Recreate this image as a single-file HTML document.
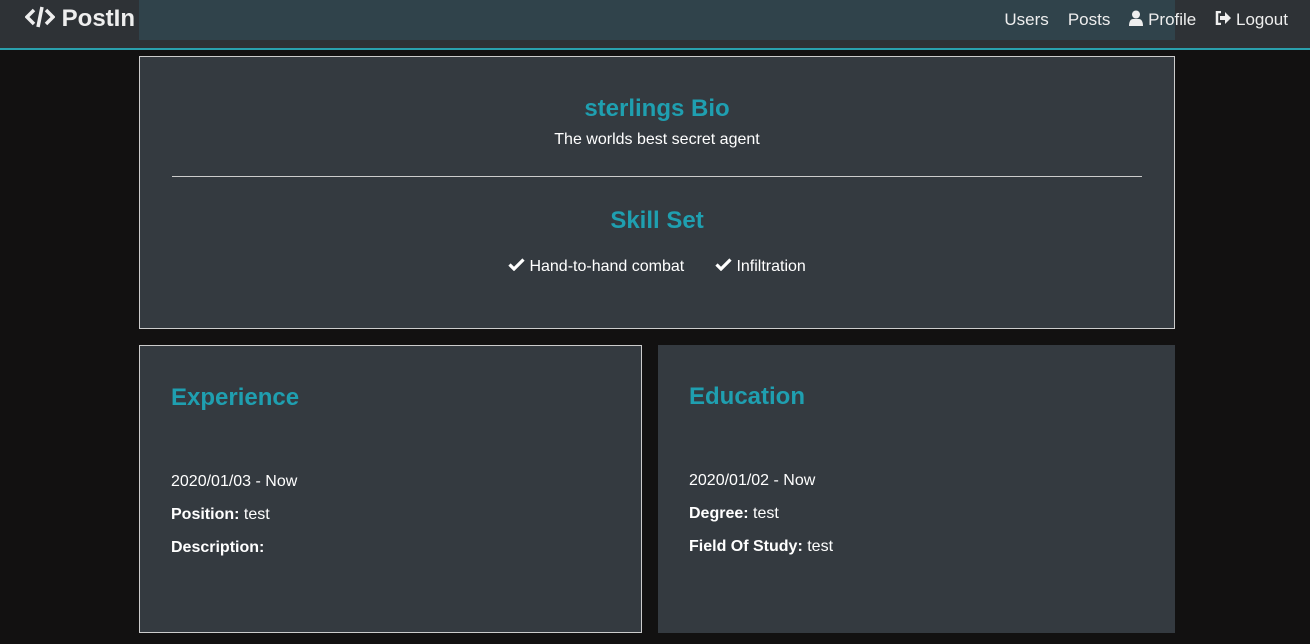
<!DOCTYPE html>
<html><head><meta charset="utf-8"><style>
*{box-sizing:border-box;margin:0;padding:0}
body{width:1310px;height:644px;background:#121111;font-family:"Liberation Sans",sans-serif;color:#fff;position:relative;overflow:hidden}
.nav{position:absolute;left:0;top:0;width:1310px;height:50px;background:#2e3236;border-bottom:2px solid #2aa0ad}
.navov{position:absolute;left:139px;top:0;width:1036px;height:40px;background:#30434b}
.logo{position:absolute;left:25px;top:5px;font-size:24px;font-weight:bold;color:#eee}
.links{position:absolute;right:22px;top:10px;font-size:17px;color:#eee}
.links span{margin-left:19px}
.box{position:absolute;background:#343a40}
h2{color:#1f9fb0;font-size:24px;font-weight:bold}
.t{position:absolute;font-size:16px}
</style></head><body>
<div class="nav"><div class="navov"></div>
<div class="logo"><svg width="30" height="24" viewBox="0 0 30 24" style="vertical-align:-3px"><path d="M9 5L2 12l7 7M21 5l7 7-7 7M17 2l-4 20" stroke="#eee" stroke-width="3.5" fill="none"/></svg> PostIn</div>
<div class="links"><span>Users</span><span>Posts</span><span><svg width="14" height="16" viewBox="0 0 14 16" style="vertical-align:-1px"><circle cx="7" cy="4.5" r="4" fill="#eee"/><path d="M0 16c0-5 2-7 4-7h6c2 0 4 2 4 7z" fill="#eee"/></svg> Profile</span><span><svg width="16" height="14" viewBox="0 0 16 14" style="vertical-align:0"><path d="M6 1H2v12h4" stroke="#eee" stroke-width="2.5" fill="none"/><path d="M5 5h5V1l6 6-6 6V9H5z" fill="#eee"/></svg> Logout</span></div>
</div>
<div class="box" style="left:139px;top:56px;width:1036px;height:273px;border:1px solid #ccc">
<h2 style="position:absolute;top:38px;width:100%;text-align:center">sterlings Bio</h2>
<div class="t" style="top:74px;width:100%;text-align:center">The worlds best secret agent</div>
<div style="position:absolute;left:32px;top:119px;width:970px;border-top:1px solid #ccc"></div>
<h2 style="position:absolute;top:150px;width:100%;text-align:center">Skill Set</h2>
<div class="t" style="top:201px;left:368px"><svg width="17" height="13" viewBox="0 0 17 13" style="vertical-align:0"><path d="M1.5 6.5l4.5 4.5 9.5-9.5" stroke="#fff" stroke-width="3.2" fill="none"/></svg> Hand-to-hand combat</div>
<div class="t" style="top:201px;left:575px"><svg width="17" height="13" viewBox="0 0 17 13" style="vertical-align:0"><path d="M1.5 6.5l4.5 4.5 9.5-9.5" stroke="#fff" stroke-width="3.2" fill="none"/></svg> Infiltration</div>
</div>
<div class="box" style="left:139px;top:345px;width:503px;height:288px;border:1px solid #ccc">
<h2 style="position:absolute;left:31px;top:38px">Experience</h2>
<div class="t" style="left:31px;top:127px">2020/01/03 - Now</div>
<div class="t" style="left:31px;top:160px"><b>Position:</b> test</div>
<div class="t" style="left:31px;top:193px"><b>Description:</b></div>
</div>
<div class="box" style="left:658px;top:345px;width:517px;height:288px">
<h2 style="position:absolute;left:31px;top:38px">Education</h2>
<div class="t" style="left:31px;top:127px">2020/01/02 - Now</div>
<div class="t" style="left:31px;top:160px"><b>Degree:</b> test</div>
<div class="t" style="left:31px;top:193px"><b>Field Of Study:</b> test</div>
</div>
</body></html>
